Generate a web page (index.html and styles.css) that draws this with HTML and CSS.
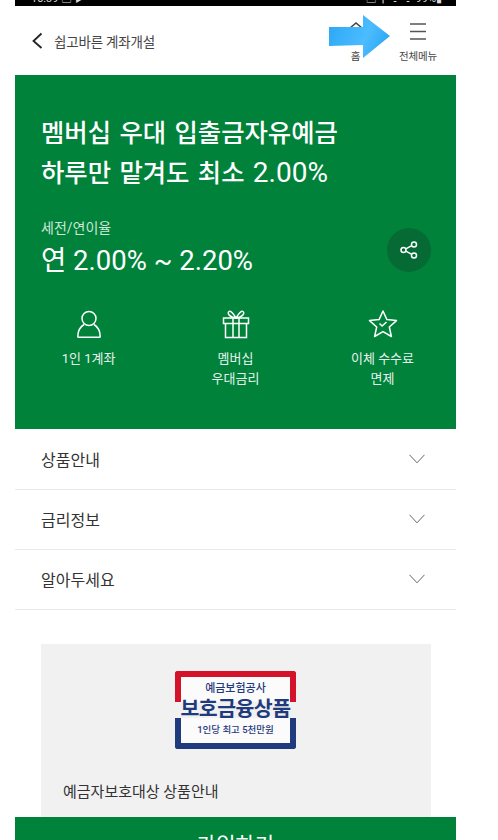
FILE: index.html
```html
<!DOCTYPE html>
<html lang="ko">
<head>
<meta charset="utf-8">
<title>계좌개설</title>
<link rel="stylesheet" href="styles.css">
</head>
<body>
<div class="phone">
  <div class="status">
    <span class="status-text">10:39 ▣ ▶</span>
    <span class="status-text">▣ ⚲ ᯤ ᯤ 99%▮</span>
  </div>
  <header class="topbar">
    <svg class="back" width="12" height="18" viewBox="0 0 12 18"><path d="M10.500 1.500 2.500 9l8 7" fill="none" stroke="#222" stroke-width="1.800"/></svg>
    <span class="page-title">쉽고바른 계좌개설</span>
    <nav class="topnav">
      <div class="navitem">
        <svg class="navicon" width="16" height="30" viewBox="0 0 16 30"><path d="M2 11l6-5 6 5" fill="none" stroke="#444" stroke-width="1.600"/></svg>
        <span class="navlabel">홈</span>
      </div>
      <div class="navitem">
        <svg class="navicon" width="16" height="30" viewBox="0 0 16 30"><path d="M0 7h16M0 14.500h16M0 22h16" fill="none" stroke="#555" stroke-width="1.600"/></svg>
        <span class="navlabel">전체메뉴</span>
      </div>
    </nav>
    <svg class="arrow" width="62" height="44" viewBox="0 0 62 44">
      <defs>
        <linearGradient id="arrowfill" x1="0" y1="0" x2="1" y2="0.3">
          <stop offset="0" stop-color="#2aa6f5"/>
          <stop offset="0.7" stop-color="#4cbcff"/>
          <stop offset="1" stop-color="#33abf7"/>
        </linearGradient>
      </defs>
      <path d="M0 12h34V0l27 21-27 22V30L0 31z" fill="url(#arrowfill)"/>
    </svg>
  </header>

  <main class="content">
    <section class="hero">
      <h1 class="hero-title">멤버십 우대 입출금자유예금<br>하루만 맡겨도 최소 <span class="num">2.00%</span></h1>
      <div class="rate-row">
        <div>
          <p class="rate-label">세전/연이율</p>
          <p class="rate-value">연 2.00% ~ 2.20%</p>
        </div>
        <button class="share" aria-label="공유">
          <svg width="20" height="20" viewBox="0 0 20 20" fill="none" stroke="#fff" stroke-width="1.500"><circle cx="15" cy="4.500" r="2.500"/><circle cx="4.500" cy="10" r="2.500"/><circle cx="15" cy="15.500" r="2.500"/><path d="M6.800 8.800 12.800 5.700M6.800 11.200l6 3.100"/></svg>
        </button>
      </div>
      <ul class="features">
        <li class="feature">
          <svg width="28" height="30" viewBox="0 0 28 30" fill="none" stroke="#fff" stroke-width="1.500"><circle cx="14" cy="9.500" r="7"/><path d="M9 15.500C5 18 2.800 22 2.800 27.500c0 .5.300.8.800.8h20.800c.5 0 .8-.3.800-.8 0-5.500-2.200-9.500-6.200-12"/></svg>
          <span>1인 1계좌</span>
        </li>
        <li class="feature">
          <svg width="28" height="30" viewBox="0 0 28 30" fill="none" stroke="#fff" stroke-width="1.500"><path d="M1.500 9h25v5.500h-25zM3.500 14.500V28.500h21V14.500M11 9v19.500M17 9v19.500M14 9C11 4 8.500 1.500 7 2.500 5 4 7 8 14 9zM14 9c3-5 5.500-7.500 7-6.500 2 1.500 0 5.500-7 6.500z"/></svg>
          <span>멤버십<br>우대금리</span>
        </li>
        <li class="feature">
          <svg width="30" height="30" viewBox="0 0 30 30" fill="none" stroke="#fff" stroke-width="1.500"><path d="M15 2l3.900 8.600 9.600 1-7.200 6.400 2.100 9.500L15 22.600l-8.400 4.900 2.100-9.500L1.500 11.600l9.600-1z" stroke-linejoin="round"/><path d="M11.500 14.500l2.600 2.500 4.400-4"/></svg>
          <span>이체 수수료<br>면제</span>
        </li>
      </ul>
    </section>

    <section class="rows">
      <div class="row"><span>상품안내</span><svg width="16" height="10" viewBox="0 0 16 10"><path d="M.5.800 8 8.800 15.500.800" fill="none" stroke="#666" stroke-width="1"/></svg></div>
      <div class="row"><span>금리정보</span><svg width="16" height="10" viewBox="0 0 16 10"><path d="M.5.800 8 8.800 15.500.800" fill="none" stroke="#666" stroke-width="1"/></svg></div>
      <div class="row"><span>알아두세요</span><svg width="16" height="10" viewBox="0 0 16 10"><path d="M.5.800 8 8.800 15.500.800" fill="none" stroke="#666" stroke-width="1"/></svg></div>
    </section>

    <section class="card">
      <div class="badge">
        <span class="badge-top">예금보험공사</span>
        <span class="badge-main">보호금융상품</span>
        <span class="badge-bottom">1인당 최고 5천만원</span>
      </div>
      <p class="card-text">예금자보호대상 상품안내</p>
    </section>
  </main>

  <div class="cta"><span>가입하기</span></div>
</div>
</body>
</html>
```
FILE: styles.css
```css
* { box-sizing: border-box; }
html, body { margin: 0; padding: 0; background: #fff; }
body {
  font-family: Roboto, "Noto Sans CJK KR", sans-serif;
  color: #333;
}
p, h1, ul { margin: 0; padding: 0; }
ul { list-style: none; }

.phone {
  width: 441px;
  height: 840px;
  margin-left: 15px;
  display: flex;
  flex-direction: column;
  overflow: hidden;
}

.status {
  flex: none;
  height: 6px;
  background: #000;
  overflow: hidden;
  display: flex;
  justify-content: space-between;
  padding: 0 14px 0 16px;
  align-items: flex-end;
}
.status-text {
  color: #ddd;
  font-size: 11px;
  line-height: 14px;
  white-space: nowrap;
}

.topbar {
  flex: none;
  height: 69px;
  position: relative;
  display: flex;
  align-items: center;
  padding: 0 30px 0 16px;
  background: #fff;
}
.back { flex: none; }
.page-title {
  margin-left: 11px;
  font-size: 13.500px;
  letter-spacing: -.2px;
  color: #444;
}
.topnav {
  margin-left: auto;
  display: flex;
  align-items: flex-start;
  gap: 46.500px;
  height: 69px;
  padding-top: 11px;
}
.navitem {
  position: relative;
  display: flex;
  flex-direction: column;
  align-items: center;
  width: 16px;
}
.navicon { display: block; }
.navlabel {
  font-size: 10.500px;
  line-height: 14px;
  letter-spacing: -.2px;
  margin-top: 3px;
  color: #444;
  white-space: nowrap;
}
.arrow {
  position: absolute;
  left: 314px;
  top: 9px;
}

.content {
  flex: 1;
  min-height: 0;
  overflow: hidden;
}

.hero {
  height: 354px;
  background: #00823b;
  color: #fff;
  padding: 38px 25px 0 26px;
}
.hero-title {
  font-size: 25.400px;
  line-height: 40px;
  font-weight: 500;
  word-spacing: 2px;
}
.num { font-size: 28px; font-weight: 400; }
.rate-row {
  margin-top: 25px;
  display: flex;
  justify-content: space-between;
  align-items: flex-start;
}
.rate-label {
  font-size: 14px;
  line-height: 20px;
  color: #cfe6d8;
}
.rate-value {
  margin-top: 6px;
  font-size: 27.500px;
  line-height: 34px;
}
.share {
  width: 44px;
  height: 44px;
  margin-top: 10px;
  padding: 0;
  border: 0;
  border-radius: 50%;
  background: #066a35;
  display: flex;
  align-items: center;
  justify-content: center;
}
.features {
  margin: 31px -25px 0 -26px;
  display: grid;
  grid-template-columns: repeat(3, 1fr);
}
.feature {
  display: flex;
  flex-direction: column;
  align-items: center;
  text-align: center;
  font-size: 13px;
  line-height: 20px;
  color: #e6f2eb;
}
.feature span { margin-top: 10px; }

.rows { margin-top: 1px; }
.row {
  height: 60px;
  border-bottom: 1px solid #eaeaea;
  padding: 0 31px 2px 26px;
  display: flex;
  align-items: center;
  justify-content: space-between;
  font-size: 16px;
  color: #333;
}

.card {
  margin: 34px 25px 0 26px;
  height: 180px;
  background: #f1f1f1;
  padding-top: 27px;
}
.badge {
  width: 121px;
  height: 78px;
  margin-left: 134px;
  position: relative;
  isolation: isolate;
  display: flex;
  flex-direction: column;
  align-items: center;
  color: #1f3a7d;
  white-space: nowrap;
  font-weight: 500;
}
.badge::before, .badge::after {
  content: "";
  position: absolute;
  z-index: -1;
  left: 0;
  right: 0;
  height: 25px;
  border: 6px solid;
  background: #fbfbfb;
}
.badge::before {
  top: 0;
  border-color: #d4122a;
  border-bottom: 0;
  border-radius: 3px 3px 0 0;
}
.badge::after {
  bottom: 0;
  border-color: #1f3a7d;
  border-top: 0;
  border-radius: 0 0 3px 3px;
}
.badge-top { font-size: 11px; line-height: 14px; margin-top: 11px; }
.badge-main { font-size: 20.500px; line-height: 26px; font-weight: 700; letter-spacing: -.5px; }
.badge-bottom { font-size: 9.500px; line-height: 14px; margin-top: 1px; }
.card-text {
  margin: 33px 0 0 22px;
  font-size: 15px;
  line-height: 20px;
  color: #333;
}

.cta {
  flex: none;
  height: 23px;
  overflow: hidden;
  background: #00823b;
  color: #fff;
  text-align: center;
  font-size: 21px;
  line-height: 56px;
}
```
